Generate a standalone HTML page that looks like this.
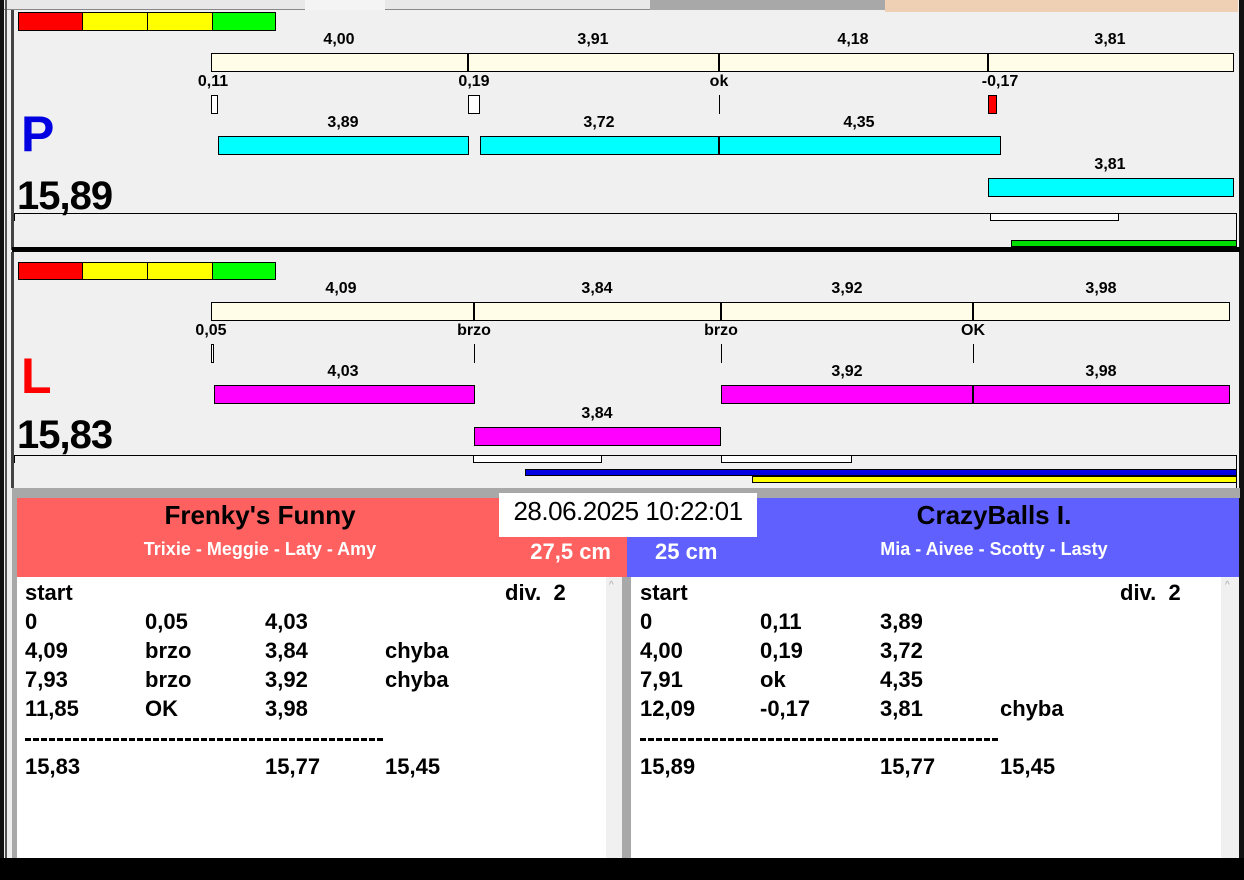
<!DOCTYPE html>
<html><head><meta charset="utf-8"><style>
*{margin:0;padding:0;box-sizing:border-box}
body{width:1244px;height:880px;position:relative;overflow:hidden;background:#f0f0f0;font-family:"Liberation Sans",Arial,sans-serif;font-weight:bold}
.a{position:absolute}
.b{position:absolute;border:1px solid #000}
.t{position:absolute;font-size:16px;transform:translateX(-50%);white-space:nowrap;line-height:18px}
.r{position:absolute;font-size:22px;line-height:26px;white-space:nowrap}
.d{position:absolute;height:3px;background:repeating-linear-gradient(90deg,#000 0 6px,transparent 6px 8px)}
</style></head><body>
<!-- top tabs -->
<div class="a" style="left:0;top:0;width:890px;height:10px;background:#e8e8e8;border-bottom:1px solid #888"></div>
<div class="a" style="left:305px;top:0;width:80px;height:10px;background:#f4f4f4"></div>
<div class="a" style="left:650px;top:0;width:240px;height:10px;background:#a8a8a8"></div>
<div class="a" style="left:885px;top:0;width:353px;height:12px;background:#f0d0b4"></div>
<div class="a" style="left:0;top:0;width:4px;height:880px;background:#111"></div>
<div class="a" style="left:5px;top:0;width:2px;height:880px;background:#555"></div>
<div class="a" style="left:1239px;top:0;width:5px;height:880px;background:#111"></div>
<div class="a" style="left:11px;top:10px;width:3px;height:240px;background:#444"></div>

<!-- TOP PANEL -->
<div class="b" style="left:18px;top:12px;width:65px;height:19px;background:#f00"></div>
<div class="b" style="left:82px;top:12px;width:66px;height:19px;background:#ff0"></div>
<div class="b" style="left:147px;top:12px;width:66px;height:19px;background:#ff0"></div>
<div class="b" style="left:212px;top:12px;width:64px;height:19px;background:#0f0"></div>

<div class="t" style="left:339px;top:31px">4,00</div>
<div class="t" style="left:593px;top:31px">3,91</div>
<div class="t" style="left:853px;top:31px">4,18</div>
<div class="t" style="left:1110px;top:31px">3,81</div>
<div class="b" style="left:211px;top:53px;width:1023px;height:19px;background:#fffde8"></div>
<div class="a" style="left:467px;top:53px;width:2px;height:19px;background:#000"></div>
<div class="a" style="left:718px;top:53px;width:2px;height:19px;background:#000"></div>
<div class="a" style="left:987px;top:53px;width:2px;height:19px;background:#000"></div>
<div class="t" style="left:213px;top:73px">0,11</div>
<div class="t" style="left:474px;top:73px">0,19</div>
<div class="t" style="left:719px;top:73px">ok</div>
<div class="t" style="left:1000px;top:73px">-0,17</div>
<div class="b" style="left:211px;top:95px;width:7px;height:19px;background:#fff"></div>
<div class="b" style="left:468px;top:95px;width:12px;height:19px;background:#fff"></div>
<div class="a" style="left:719px;top:95px;width:1px;height:19px;background:#000"></div>
<div class="b" style="left:988px;top:95px;width:9px;height:19px;background:#f00"></div>
<div class="a" style="left:21px;top:104px;font-size:50px;color:#0000e0;line-height:60px">P</div>
<div class="t" style="left:343px;top:114px">3,89</div>
<div class="t" style="left:599px;top:114px">3,72</div>
<div class="t" style="left:859px;top:114px">4,35</div>
<div class="b" style="left:218px;top:136px;width:251px;height:19px;background:#0ff"></div>
<div class="b" style="left:480px;top:136px;width:521px;height:19px;background:#0ff"></div>
<div class="a" style="left:718px;top:136px;width:2px;height:19px;background:#000"></div>
<div class="t" style="left:1110px;top:156px">3,81</div>
<div class="b" style="left:988px;top:178px;width:246px;height:19px;background:#0ff"></div>
<div class="a" style="left:17px;top:174px;font-size:40px;line-height:44px;letter-spacing:-1px">15,89</div>
<div class="a" style="left:14px;top:213px;width:1223px;height:1px;background:#000"></div>
<div class="a" style="left:14px;top:213px;width:1px;height:8px;background:#000"></div>
<div class="a" style="left:1236px;top:213px;width:1px;height:34px;background:#000"></div>
<div class="b" style="left:990px;top:213px;width:129px;height:8px;background:#fff"></div>
<div class="b" style="left:1011px;top:240px;width:226px;height:7px;background:#0d0"></div>
<div class="a" style="left:12px;top:247px;width:1228px;height:5px;background:#000"></div>

<!-- BOTTOM PANEL -->
<div class="a" style="left:11px;top:252px;width:3px;height:236px;background:#444"></div>
<div class="b" style="left:18px;top:262px;width:65px;height:18px;background:#f00"></div>
<div class="b" style="left:82px;top:262px;width:66px;height:18px;background:#ff0"></div>
<div class="b" style="left:147px;top:262px;width:66px;height:18px;background:#ff0"></div>
<div class="b" style="left:212px;top:262px;width:64px;height:18px;background:#0f0"></div>
<div class="t" style="left:341px;top:280px">4,09</div>
<div class="t" style="left:597px;top:280px">3,84</div>
<div class="t" style="left:847px;top:280px">3,92</div>
<div class="t" style="left:1101px;top:280px">3,98</div>
<div class="b" style="left:211px;top:302px;width:1019px;height:19px;background:#fffde8"></div>
<div class="a" style="left:473px;top:302px;width:2px;height:19px;background:#000"></div>
<div class="a" style="left:720px;top:302px;width:2px;height:19px;background:#000"></div>
<div class="a" style="left:972px;top:302px;width:2px;height:19px;background:#000"></div>
<div class="t" style="left:211px;top:322px">0,05</div>
<div class="t" style="left:474px;top:322px">brzo</div>
<div class="t" style="left:721px;top:322px">brzo</div>
<div class="t" style="left:973px;top:322px">OK</div>
<div class="b" style="left:211px;top:344px;width:3px;height:19px;background:#fff"></div>
<div class="a" style="left:474px;top:344px;width:1px;height:19px;background:#000"></div>
<div class="a" style="left:721px;top:344px;width:1px;height:19px;background:#000"></div>
<div class="a" style="left:973px;top:344px;width:1px;height:19px;background:#000"></div>
<div class="a" style="left:21px;top:346px;font-size:50px;color:#f00;line-height:60px">L</div>
<div class="t" style="left:343px;top:363px">4,03</div>
<div class="t" style="left:847px;top:363px">3,92</div>
<div class="t" style="left:1101px;top:363px">3,98</div>
<div class="b" style="left:214px;top:385px;width:261px;height:19px;background:#f0f"></div>
<div class="b" style="left:721px;top:385px;width:509px;height:19px;background:#f0f"></div>
<div class="a" style="left:972px;top:385px;width:2px;height:19px;background:#000"></div>
<div class="t" style="left:597px;top:405px">3,84</div>
<div class="b" style="left:474px;top:427px;width:247px;height:19px;background:#f0f"></div>
<div class="a" style="left:17px;top:413px;font-size:40px;line-height:44px;letter-spacing:-1px">15,83</div>
<div class="a" style="left:14px;top:455px;width:1223px;height:1px;background:#000"></div>
<div class="a" style="left:14px;top:455px;width:1px;height:8px;background:#000"></div>
<div class="a" style="left:1236px;top:455px;width:1px;height:33px;background:#000"></div>
<div class="b" style="left:473px;top:455px;width:129px;height:8px;background:#fff"></div>
<div class="b" style="left:721px;top:455px;width:131px;height:8px;background:#fff"></div>
<div class="b" style="left:525px;top:469px;width:712px;height:7px;background:#0000e0"></div>
<div class="b" style="left:752px;top:476px;width:485px;height:7px;background:#ff0"></div>
<div class="a" style="left:12px;top:488px;width:1228px;height:10px;background:#a8a8a8"></div>

<!-- TEAMS -->
<div class="a" style="left:12px;top:498px;width:5px;height:360px;background:#a8a8a8"></div>
<div class="a" style="left:17px;top:498px;width:610px;height:79px;background:#ff6060"></div>
<div class="a" style="left:627px;top:498px;width:612px;height:79px;background:#6060ff"></div>
<div class="a" style="left:499px;top:493px;width:258px;height:44px;background:#fff"></div>
<div class="a" style="left:499px;top:495px;width:258px;text-align:center;font-size:26px;font-weight:normal;line-height:32px;letter-spacing:-0.5px">28.06.2025 10:22:01</div>
<div class="a" style="left:60px;top:500px;width:400px;text-align:center;font-size:26px;line-height:30px">Frenky's Funny</div>
<div class="a" style="left:60px;top:538px;width:400px;text-align:center;font-size:18px;color:#fff;line-height:22px">Trixie - Meggie - Laty - Amy</div>
<div class="a" style="left:500px;top:539px;width:111px;text-align:right;font-size:22px;color:#fff;line-height:26px">27,5 cm</div>
<div class="a" style="left:655px;top:539px;font-size:22px;color:#fff;line-height:26px">25 cm</div>
<div class="a" style="left:794px;top:500px;width:400px;text-align:center;font-size:26px;line-height:30px">CrazyBalls I.</div>
<div class="a" style="left:794px;top:538px;width:400px;text-align:center;font-size:18px;color:#fff;line-height:22px">Mia - Aivee - Scotty - Lasty</div>

<!-- LISTS -->
<div class="a" style="left:17px;top:577px;width:589px;height:281px;background:#fff"></div>
<div class="a" style="left:606px;top:577px;width:16px;height:281px;background:#f0f0f0"></div>
<div class="a" style="left:622px;top:577px;width:9px;height:281px;background:#a8a8a8"></div>
<div class="a" style="left:631px;top:577px;width:590px;height:281px;background:#fff"></div>
<div class="a" style="left:1221px;top:577px;width:18px;height:281px;background:#f0f0f0"></div>
<div class="a" style="left:609px;top:580px;font-size:10px;color:#aaa;font-weight:normal">^</div>
<div class="a" style="left:1225px;top:580px;font-size:10px;color:#aaa;font-weight:normal">^</div>
<div class="a" style="left:0;top:858px;width:1244px;height:22px;background:#000"></div>

<div class="r" style="left:25px;top:580px">start</div><div class="r" style="left:505px;top:580px">div.&nbsp; 2</div>
<div class="r" style="left:25px;top:609px">0</div><div class="r" style="left:145px;top:609px">0,05</div><div class="r" style="left:265px;top:609px">4,03</div>
<div class="r" style="left:25px;top:638px">4,09</div><div class="r" style="left:145px;top:638px">brzo</div><div class="r" style="left:265px;top:638px">3,84</div><div class="r" style="left:385px;top:638px">chyba</div>
<div class="r" style="left:25px;top:667px">7,93</div><div class="r" style="left:145px;top:667px">brzo</div><div class="r" style="left:265px;top:667px">3,92</div><div class="r" style="left:385px;top:667px">chyba</div>
<div class="r" style="left:25px;top:696px">11,85</div><div class="r" style="left:145px;top:696px">OK</div><div class="r" style="left:265px;top:696px">3,98</div>
<div class="d" style="left:25px;top:738px;width:360px"></div>
<div class="r" style="left:25px;top:754px">15,83</div><div class="r" style="left:265px;top:754px">15,77</div><div class="r" style="left:385px;top:754px">15,45</div>

<div class="r" style="left:640px;top:580px">start</div><div class="r" style="left:1120px;top:580px">div.&nbsp; 2</div>
<div class="r" style="left:640px;top:609px">0</div><div class="r" style="left:760px;top:609px">0,11</div><div class="r" style="left:880px;top:609px">3,89</div>
<div class="r" style="left:640px;top:638px">4,00</div><div class="r" style="left:760px;top:638px">0,19</div><div class="r" style="left:880px;top:638px">3,72</div>
<div class="r" style="left:640px;top:667px">7,91</div><div class="r" style="left:760px;top:667px">ok</div><div class="r" style="left:880px;top:667px">4,35</div>
<div class="r" style="left:640px;top:696px">12,09</div><div class="r" style="left:760px;top:696px">-0,17</div><div class="r" style="left:880px;top:696px">3,81</div><div class="r" style="left:1000px;top:696px">chyba</div>
<div class="d" style="left:640px;top:738px;width:360px"></div>
<div class="r" style="left:640px;top:754px">15,89</div><div class="r" style="left:880px;top:754px">15,77</div><div class="r" style="left:1000px;top:754px">15,45</div>
</body></html>
